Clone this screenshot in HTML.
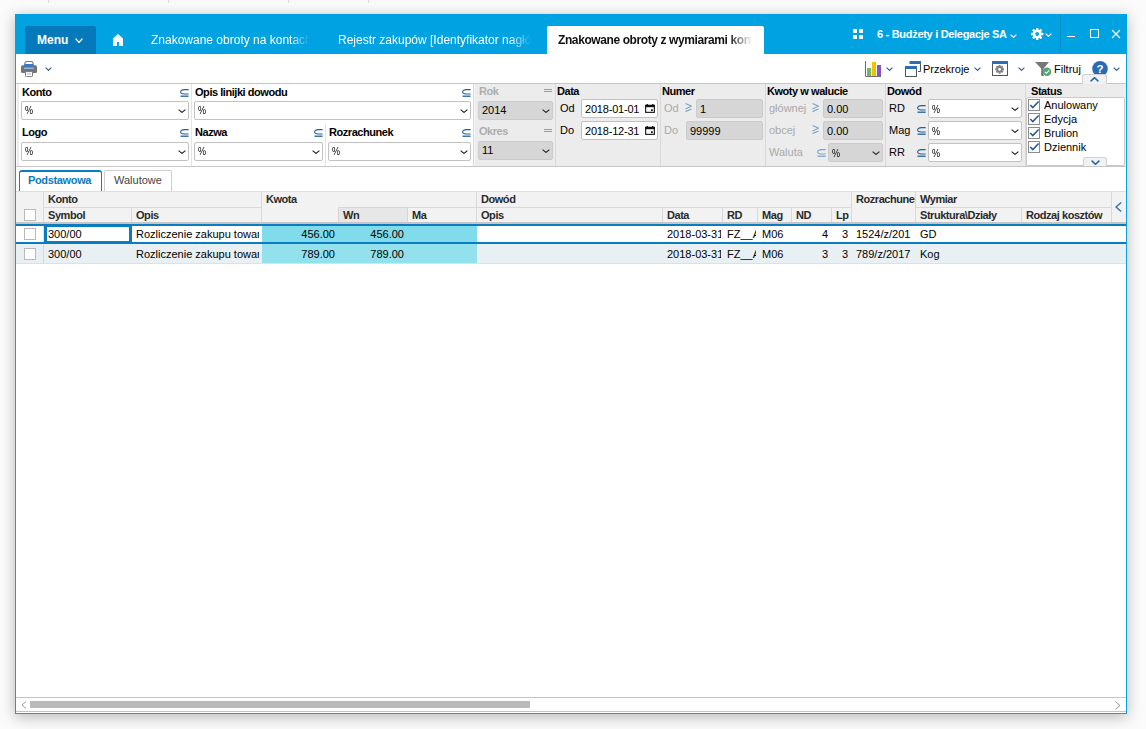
<!DOCTYPE html><html><head><meta charset="utf-8"><style>
*{margin:0;padding:0;box-sizing:border-box}
html,body{width:1146px;height:729px;overflow:hidden;background:#fbfbfb;font-family:"Liberation Sans",sans-serif;font-size:11px;color:#1c1c1c}
.a{position:absolute}
.t{white-space:nowrap;line-height:1}
.v{color:#000}
.lbl{font-weight:bold;letter-spacing:-0.45px;color:#000}
.glbl{font-weight:bold;letter-spacing:-0.45px;color:#adadad}
.g{color:#a9a9a9}
.cb{position:absolute;width:12px;height:12px;border:1px solid #b9b9b9;background:#fff}
.hd{position:absolute;font-weight:bold;letter-spacing:-0.45px;color:#2b2b2b;line-height:1;white-space:nowrap}
.cell{position:absolute;line-height:1;white-space:nowrap;color:#000;overflow:hidden}
</style></head><body>
<div class="a" style="left:48px;top:0px;width:1px;height:3px;background:#dadada"></div>
<div class="a" style="left:168px;top:0px;width:1px;height:3px;background:#dadada"></div>
<div class="a" style="left:288px;top:0px;width:1px;height:3px;background:#dadada"></div>
<div class="a" style="left:368px;top:0px;width:1px;height:3px;background:#dadada"></div>
<div class="a" style="left:15px;top:14px;width:1112px;height:700px;background:#fff;border:1px solid #0aa2e0;box-shadow:0 3px 14px rgba(0,0,0,.27)"></div>
<div class="a" style="left:15px;top:14px;width:1112px;height:40px;background:#00a2e2"></div>
<div class="a" style="left:25px;top:26px;width:71px;height:28px;background:#0679ba;border-radius:2px 2px 0 0"></div>
<div class="a t" style="left:37px;top:34px;font-size:12px;font-weight:bold;color:#fff">Menu</div>
<svg class="a" style="left:75px;top:38px" width="8" height="5" viewBox="0 0 8 5"><path d="M0.6 0.6 L4.0 4.4 L7.4 0.6" fill="none" stroke="#fff" stroke-width="1.4"/></svg>
<svg class="a" style="left:113px;top:34px" width="10" height="12" viewBox="0 0 10 12"><path d="M5 0 L10 4.6 V12 H6 V7.9 H4 V12 H0 V4.6 Z" fill="#fff"/></svg>
<div class="a" style="left:151px;top:34px;width:159px;height:15px;overflow:hidden;-webkit-mask-image:linear-gradient(90deg,#000 87%,transparent 100%)"><div class="t" style="font-size:12px;color:#fff">Znakowane obroty na kontach</div></div>
<div class="a" style="left:338px;top:34px;width:194px;height:15px;overflow:hidden;-webkit-mask-image:linear-gradient(90deg,#000 88%,transparent 100%)"><div class="t" style="font-size:12px;color:#fff">Rejestr zakupów [Identyfikator nagłówka]</div></div>
<div class="a" style="left:547px;top:26px;width:217px;height:28px;background:#fff;border-radius:2px 2px 0 0"></div>
<div class="a" style="left:558px;top:34px;width:194px;height:15px;overflow:hidden;-webkit-mask-image:linear-gradient(90deg,#000 88%,transparent 100%)"><div class="t" style="font-size:12px;color:#111;font-weight:bold;letter-spacing:-0.4px">Znakowane obroty z wymiarami kontach</div></div>
<div class="a" style="left:853px;top:29px;width:4px;height:4px;background:#fff"></div>
<div class="a" style="left:859px;top:29px;width:4px;height:4px;background:#fff"></div>
<div class="a" style="left:853px;top:35px;width:4px;height:4px;background:#fff"></div>
<div class="a" style="left:859px;top:35px;width:4px;height:4px;background:#fff"></div>
<div class="a t" style="left:877px;top:29px;font-size:11px;font-weight:bold;letter-spacing:-0.3px;color:#fff">6 - Budżety i Delegacje SA</div>
<svg class="a" style="left:1010px;top:34px" width="7" height="4" viewBox="0 0 7 4"><path d="M0.6 0.6 L3.5 3.4 L6.4 0.6" fill="none" stroke="#fff" stroke-width="1.1"/></svg>
<svg class="a" style="left:1030px;top:27px" width="14" height="14" viewBox="0 0 14 14"><g fill="#fff"><circle cx="7.2" cy="7" r="4.4"/><rect x="6" y="0.9" width="2.4" height="12.2" rx=".4" transform="rotate(0 7.2 7)"/><rect x="6" y="0.9" width="2.4" height="12.2" rx=".4" transform="rotate(45 7.2 7)"/><rect x="6" y="0.9" width="2.4" height="12.2" rx=".4" transform="rotate(90 7.2 7)"/><rect x="6" y="0.9" width="2.4" height="12.2" rx=".4" transform="rotate(135 7.2 7)"/></g><circle cx="7.2" cy="7" r="1.9" fill="#00a2e2"/></svg>
<svg class="a" style="left:1045px;top:33px" width="7" height="4" viewBox="0 0 7 4"><path d="M0.6 0.6 L3.5 3.4 L6.4 0.6" fill="none" stroke="#fff" stroke-width="1.1"/></svg>
<div class="a" style="left:1060px;top:14px;width:1px;height:40px;background:#0b8fc8"></div>
<div class="a" style="left:1067px;top:36px;width:8px;height:1px;background:#fff"></div>
<div class="a" style="left:1090px;top:29px;width:9px;height:9px;border:1px solid #fff"></div>
<svg class="a" style="left:1111px;top:29px" width="10" height="10" viewBox="0 0 10 10"><path d="M1 1 L9 9 M9 1 L1 9" stroke="#fff" stroke-width="1.1"/></svg>
<div class="a" style="left:16px;top:83px;width:1110px;height:1px;background:#c8c6c4"></div>
<svg class="a" style="left:21px;top:61px" width="16" height="16" viewBox="0 0 16 16"><path d="M3.8 3.5 V2.6 A2.2 2.2 0 0 1 6 0.5 H10 A2.2 2.2 0 0 1 12.2 2.6 V3.5" fill="none" stroke="#777" stroke-width="1.1"/><rect x="0" y="4.2" width="16" height="7.8" rx="1.6" fill="#747474"/><rect x="3" y="3" width="9.8" height="4.2" rx=".8" fill="#3f78c0"/><rect x="3" y="6.6" width="9.8" height="1.2" fill="#a8c4e4"/><rect x="4.5" y="10.6" width="7" height="5" rx=".8" fill="#fff" stroke="#777" stroke-width="1"/><rect x="6" y="12.3" width="4" height="1.2" fill="#a8c4e4"/></svg>
<svg class="a" style="left:45px;top:67px" width="7" height="4" viewBox="0 0 7 4"><path d="M0.6 0.6 L3.5 3.4 L6.4 0.6" fill="none" stroke="#2b5d92" stroke-width="1.1"/></svg>
<svg class="a" style="left:865px;top:61px" width="16" height="16" viewBox="0 0 16 16"><path d="M0.5 0 V15.5 H16" fill="none" stroke="#6e6e6e" stroke-width="1"/><rect x="2" y="7" width="4" height="8" fill="#6cba6c"/><rect x="7" y="1" width="4" height="14" fill="#f7bf00"/><rect x="12" y="4" width="4" height="11" fill="#8655c4"/></svg>
<svg class="a" style="left:886px;top:67px" width="7" height="4" viewBox="0 0 7 4"><path d="M0.6 0.6 L3.5 3.4 L6.4 0.6" fill="none" stroke="#2b5d92" stroke-width="1.1"/></svg>
<svg class="a" style="left:905px;top:61px" width="16" height="16" viewBox="0 0 16 16"><path d="M5 1.5 H15.5 V10.5 H13" fill="none" stroke="#555" stroke-width="1"/><rect x="4.5" y="0" width="11.5" height="3" fill="#2f6cb5"/><rect x="0.5" y="5.5" width="11" height="10" fill="#fff" stroke="#555" stroke-width="1"/><rect x="0" y="5" width="12" height="3" fill="#2f6cb5"/></svg>
<div class="a t" style="left:923px;top:64px;color:#000">Przekroje</div>
<svg class="a" style="left:974px;top:67px" width="7" height="4" viewBox="0 0 7 4"><path d="M0.6 0.6 L3.5 3.4 L6.4 0.6" fill="none" stroke="#2b5d92" stroke-width="1.1"/></svg>
<svg class="a" style="left:992px;top:61px" width="16" height="15" viewBox="0 0 16 15"><rect x="0.5" y="0.5" width="15" height="14" fill="#fff" stroke="#555" stroke-width="1"/><rect x="0" y="0" width="16" height="3" fill="#2f6cb5"/><g transform="translate(7.6 8.3)" fill="#808080"><circle r="3.2"/><rect x="-1" y="-4.4" width="2" height="8.8"/><rect x="-1" y="-4.4" width="2" height="8.8" transform="rotate(45)"/><rect x="-1" y="-4.4" width="2" height="8.8" transform="rotate(90)"/><rect x="-1" y="-4.4" width="2" height="8.8" transform="rotate(135)"/></g><circle cx="7.6" cy="8.3" r="1.4" fill="#fff"/></svg>
<svg class="a" style="left:1018px;top:67px" width="7" height="4" viewBox="0 0 7 4"><path d="M0.6 0.6 L3.5 3.4 L6.4 0.6" fill="none" stroke="#2b5d92" stroke-width="1.1"/></svg>
<svg class="a" style="left:1035px;top:62px" width="17" height="14" viewBox="0 0 17 14"><path d="M0 0 H14 L8.6 6.5 V14 H6.2 V6.5 Z" fill="#777"/><circle cx="12" cy="9.7" r="4.3" fill="#55a674"/><path d="M9.9 9.8 L11.5 11.3 L14.2 8.3" fill="none" stroke="#fff" stroke-width="1.1"/></svg>
<div class="a t" style="left:1054px;top:64px;color:#000">Filtruj</div>
<svg class="a" style="left:1092px;top:61px" width="16" height="16" viewBox="0 0 16 16"><circle cx="8" cy="7.8" r="7.8" fill="#2a6bb5"/><text x="8" y="12" text-anchor="middle" font-family="Liberation Sans" font-weight="bold" font-size="11.5" fill="#fff">?</text></svg>
<svg class="a" style="left:1113px;top:67px" width="7" height="4" viewBox="0 0 7 4"><path d="M0.6 0.6 L3.5 3.4 L6.4 0.6" fill="none" stroke="#2b5d92" stroke-width="1.1"/></svg>
<div class="a" style="left:1082px;top:74px;width:25px;height:10px;background:#f2f2f2;border:1px solid #d2d2d2;border-bottom:none;border-radius:3px 3px 0 0"></div>
<svg class="a" style="left:1090px;top:77px" width="9" height="5" viewBox="0 0 9 5"><path d="M0.6 4.4 L4.5 0.6 L8.4 4.4" fill="none" stroke="#2b6aa8" stroke-width="1.5"/></svg>
<div class="a" style="left:17px;top:84px;width:2px;height:82px;background:#ececec"></div>
<div class="a" style="left:474px;top:84px;width:652px;height:82px;background:#ececec"></div>
<div class="a" style="left:16px;top:166px;width:1110px;height:1px;background:#c8c6c4"></div>
<div class="a" style="left:191px;top:84px;width:1px;height:82px;background:#e3e3e3"></div>
<div class="a" style="left:325px;top:124px;width:1px;height:42px;background:#e3e3e3"></div>
<div class="a" style="left:473px;top:84px;width:1px;height:82px;background:#d8d8d8"></div>
<div class="a" style="left:474px;top:84px;width:1px;height:82px;background:#f6f6f6"></div>
<div class="a" style="left:555px;top:84px;width:1px;height:82px;background:#d9d9d9"></div>
<div class="a" style="left:660px;top:84px;width:1px;height:82px;background:#d9d9d9"></div>
<div class="a" style="left:765px;top:84px;width:1px;height:82px;background:#d9d9d9"></div>
<div class="a" style="left:885px;top:84px;width:1px;height:82px;background:#d9d9d9"></div>
<div class="a" style="left:1025px;top:84px;width:1px;height:82px;background:#d9d9d9"></div>
<div class="a t lbl" style="left:22px;top:87px;">Konto</div>
<svg class="a" style="left:462px;top:89px" width="9" height="8" viewBox="0 0 9 8"><path d="M8.6 0.6 H4.4 A3.8 2.2 0 0 0 4.4 5 H8.6" fill="none" stroke="#1f5e9c" stroke-width="1.05"/><path d="M0.5 7.2 H8.6" fill="none" stroke="#1f5e9c" stroke-width="1.3"/></svg>
<svg class="a" style="left:180px;top:89px" width="9" height="8" viewBox="0 0 9 8"><path d="M8.6 0.6 H4.4 A3.8 2.2 0 0 0 4.4 5 H8.6" fill="none" stroke="#1f5e9c" stroke-width="1.05"/><path d="M0.5 7.2 H8.6" fill="none" stroke="#1f5e9c" stroke-width="1.3"/></svg>
<div class="a" style="left:21px;top:101px;width:168px;height:19px;background:#fff;border:1px solid #c2c2c2;border-radius:2px"></div>
<div class="a t v" style="left:25px;top:105px;"><span style="display:inline-block;transform:scaleX(0.82);transform-origin:0 0;color:#000">%</span></div>
<svg class="a" style="left:178px;top:109px" width="8" height="4" viewBox="0 0 8 4"><path d="M0.6 0.6 L4.0 3.4 L7.4 0.6" fill="none" stroke="#222" stroke-width="1.1"/></svg>
<div class="a t lbl" style="left:22px;top:127px;">Logo</div>
<svg class="a" style="left:180px;top:129px" width="9" height="8" viewBox="0 0 9 8"><path d="M8.6 0.6 H4.4 A3.8 2.2 0 0 0 4.4 5 H8.6" fill="none" stroke="#1f5e9c" stroke-width="1.05"/><path d="M0.5 7.2 H8.6" fill="none" stroke="#1f5e9c" stroke-width="1.3"/></svg>
<div class="a" style="left:21px;top:142px;width:168px;height:19px;background:#fff;border:1px solid #c2c2c2;border-radius:2px"></div>
<div class="a t v" style="left:25px;top:146px;"><span style="display:inline-block;transform:scaleX(0.82);transform-origin:0 0;color:#000">%</span></div>
<svg class="a" style="left:178px;top:150px" width="8" height="4" viewBox="0 0 8 4"><path d="M0.6 0.6 L4.0 3.4 L7.4 0.6" fill="none" stroke="#222" stroke-width="1.1"/></svg>
<div class="a t lbl" style="left:195px;top:87px;">Opis linijki dowodu</div>
<div class="a" style="left:194px;top:101px;width:277px;height:19px;background:#fff;border:1px solid #c2c2c2;border-radius:2px"></div>
<div class="a t v" style="left:198px;top:105px;"><span style="display:inline-block;transform:scaleX(0.82);transform-origin:0 0;color:#000">%</span></div>
<svg class="a" style="left:460px;top:109px" width="8" height="4" viewBox="0 0 8 4"><path d="M0.6 0.6 L4.0 3.4 L7.4 0.6" fill="none" stroke="#222" stroke-width="1.1"/></svg>
<div class="a t lbl" style="left:195px;top:127px;">Nazwa</div>
<svg class="a" style="left:314px;top:129px" width="9" height="8" viewBox="0 0 9 8"><path d="M8.6 0.6 H4.4 A3.8 2.2 0 0 0 4.4 5 H8.6" fill="none" stroke="#1f5e9c" stroke-width="1.05"/><path d="M0.5 7.2 H8.6" fill="none" stroke="#1f5e9c" stroke-width="1.3"/></svg>
<div class="a" style="left:194px;top:142px;width:129px;height:19px;background:#fff;border:1px solid #c2c2c2;border-radius:2px"></div>
<div class="a t v" style="left:198px;top:146px;"><span style="display:inline-block;transform:scaleX(0.82);transform-origin:0 0;color:#000">%</span></div>
<svg class="a" style="left:312px;top:150px" width="8" height="4" viewBox="0 0 8 4"><path d="M0.6 0.6 L4.0 3.4 L7.4 0.6" fill="none" stroke="#222" stroke-width="1.1"/></svg>
<div class="a t lbl" style="left:329px;top:127px;">Rozrachunek</div>
<svg class="a" style="left:462px;top:129px" width="9" height="8" viewBox="0 0 9 8"><path d="M8.6 0.6 H4.4 A3.8 2.2 0 0 0 4.4 5 H8.6" fill="none" stroke="#1f5e9c" stroke-width="1.05"/><path d="M0.5 7.2 H8.6" fill="none" stroke="#1f5e9c" stroke-width="1.3"/></svg>
<div class="a" style="left:328px;top:142px;width:143px;height:19px;background:#fff;border:1px solid #c2c2c2;border-radius:2px"></div>
<div class="a t v" style="left:332px;top:146px;"><span style="display:inline-block;transform:scaleX(0.82);transform-origin:0 0;color:#000">%</span></div>
<svg class="a" style="left:460px;top:150px" width="8" height="4" viewBox="0 0 8 4"><path d="M0.6 0.6 L4.0 3.4 L7.4 0.6" fill="none" stroke="#222" stroke-width="1.1"/></svg>
<div class="a t glbl" style="left:479px;top:86px;">Rok</div>
<div class="a" style="left:544px;top:89px;width:8px;height:1px;background:#7ba3c9"></div>
<div class="a" style="left:544px;top:91px;width:8px;height:1px;background:#7ba3c9"></div>
<div class="a" style="left:478px;top:101px;width:75px;height:19px;background:#d6d6d6;border:1px solid #cbcbcb;border-radius:2px"></div>
<div class="a t v" style="left:482px;top:105px;">2014</div>
<svg class="a" style="left:542px;top:109px" width="8" height="4" viewBox="0 0 8 4"><path d="M0.6 0.6 L4.0 3.4 L7.4 0.6" fill="none" stroke="#222" stroke-width="1.1"/></svg>
<div class="a t glbl" style="left:479px;top:126px;">Okres</div>
<div class="a" style="left:544px;top:129px;width:8px;height:1px;background:#7ba3c9"></div>
<div class="a" style="left:544px;top:131px;width:8px;height:1px;background:#7ba3c9"></div>
<div class="a" style="left:478px;top:141px;width:75px;height:19px;background:#d6d6d6;border:1px solid #cbcbcb;border-radius:2px"></div>
<div class="a t v" style="left:482px;top:145px;">11</div>
<svg class="a" style="left:542px;top:149px" width="8" height="4" viewBox="0 0 8 4"><path d="M0.6 0.6 L4.0 3.4 L7.4 0.6" fill="none" stroke="#222" stroke-width="1.1"/></svg>
<div class="a t lbl" style="left:557px;top:86px;">Data</div>
<div class="a t" style="left:560px;top:103px;color:#000">Od</div>
<div class="a t" style="left:560px;top:125px;color:#000">Do</div>
<div class="a" style="left:581px;top:99px;width:77px;height:19px;background:#fff;border:1px solid #c2c2c2;border-radius:2px"></div>
<div class="a t v" style="left:585px;top:104px;"><span style="letter-spacing:-0.2px">2018-01-01</span></div>
<svg class="a" style="left:645px;top:104px" width="10" height="9" viewBox="0 0 10 9"><rect x="1.6" y="0" width="1.3" height="1.6" fill="#111"/><rect x="7.1" y="0" width="1.3" height="1.6" fill="#111"/><rect x="0.65" y="1.3" width="8.7" height="7.05" fill="none" stroke="#111" stroke-width="1.1"/><rect x="0.2" y="1" width="9.6" height="2.2" fill="#111"/><rect x="6" y="5.3" width="1.8" height="1.7" fill="#111"/></svg>
<div class="a" style="left:581px;top:121px;width:77px;height:19px;background:#fff;border:1px solid #c2c2c2;border-radius:2px"></div>
<div class="a t v" style="left:585px;top:126px;"><span style="letter-spacing:-0.2px">2018-12-31</span></div>
<svg class="a" style="left:645px;top:126px" width="10" height="9" viewBox="0 0 10 9"><rect x="1.6" y="0" width="1.3" height="1.6" fill="#111"/><rect x="7.1" y="0" width="1.3" height="1.6" fill="#111"/><rect x="0.65" y="1.3" width="8.7" height="7.05" fill="none" stroke="#111" stroke-width="1.1"/><rect x="0.2" y="1" width="9.6" height="2.2" fill="#111"/><rect x="6" y="5.3" width="1.8" height="1.7" fill="#111"/></svg>
<div class="a t lbl" style="left:662px;top:86px;">Numer</div>
<div class="a t g" style="left:664px;top:103px;">Od</div>
<svg class="a" style="left:685px;top:103px" width="7" height="9" viewBox="0 0 7 9"><path d="M0.5 0.5 L6.5 3.2 L0.5 5.9 M0.5 8.6 L6.5 5.9" fill="none" stroke="#7ba3c9" stroke-width="1.1"/></svg>
<div class="a" style="left:696px;top:99px;width:67px;height:19px;background:#d6d6d6;border:1px solid #cbcbcb;border-radius:2px"></div>
<div class="a t v" style="left:700px;top:104px;">1</div>
<div class="a t g" style="left:664px;top:125px;">Do</div>
<div class="a" style="left:686px;top:121px;width:77px;height:19px;background:#d6d6d6;border:1px solid #cbcbcb;border-radius:2px"></div>
<div class="a t v" style="left:690px;top:126px;">99999</div>
<div class="a t lbl" style="left:767px;top:86px;">Kwoty w walucie</div>
<div class="a t g" style="left:769px;top:103px;">głównej</div>
<svg class="a" style="left:812px;top:103px" width="7" height="9" viewBox="0 0 7 9"><path d="M0.5 0.5 L6.5 3.2 L0.5 5.9 M0.5 8.6 L6.5 5.9" fill="none" stroke="#7ba3c9" stroke-width="1.1"/></svg>
<div class="a" style="left:823px;top:99px;width:60px;height:19px;background:#d6d6d6;border:1px solid #cbcbcb;border-radius:2px"></div>
<div class="a t v" style="left:827px;top:104px;">0.00</div>
<div class="a t g" style="left:769px;top:125px;">obcej</div>
<svg class="a" style="left:812px;top:125px" width="7" height="9" viewBox="0 0 7 9"><path d="M0.5 0.5 L6.5 3.2 L0.5 5.9 M0.5 8.6 L6.5 5.9" fill="none" stroke="#7ba3c9" stroke-width="1.1"/></svg>
<div class="a" style="left:823px;top:121px;width:60px;height:19px;background:#d6d6d6;border:1px solid #cbcbcb;border-radius:2px"></div>
<div class="a t v" style="left:827px;top:126px;">0.00</div>
<div class="a t g" style="left:769px;top:147px;">Waluta</div>
<svg class="a" style="left:817px;top:149px" width="9" height="8" viewBox="0 0 9 8"><path d="M8.6 0.6 H4.4 A3.8 2.2 0 0 0 4.4 5 H8.6" fill="none" stroke="#7ba3c9" stroke-width="1.05"/><path d="M0.5 7.2 H8.6" fill="none" stroke="#7ba3c9" stroke-width="1.3"/></svg>
<div class="a" style="left:828px;top:143px;width:55px;height:19px;background:#d6d6d6;border:1px solid #cbcbcb;border-radius:2px"></div>
<div class="a t v" style="left:832px;top:148px;"><span style="display:inline-block;transform:scaleX(0.82);transform-origin:0 0;color:#000">%</span></div>
<svg class="a" style="left:872px;top:151px" width="8" height="4" viewBox="0 0 8 4"><path d="M0.6 0.6 L4.0 3.4 L7.4 0.6" fill="none" stroke="#222" stroke-width="1.1"/></svg>
<div class="a t lbl" style="left:887px;top:86px;">Dowód</div>
<div class="a t" style="left:889px;top:103px;color:#000">RD</div>
<svg class="a" style="left:917px;top:105px" width="9" height="8" viewBox="0 0 9 8"><path d="M8.6 0.6 H4.4 A3.8 2.2 0 0 0 4.4 5 H8.6" fill="none" stroke="#1f5e9c" stroke-width="1.05"/><path d="M0.5 7.2 H8.6" fill="none" stroke="#1f5e9c" stroke-width="1.3"/></svg>
<div class="a" style="left:928px;top:99px;width:94px;height:19px;background:#fff;border:1px solid #c2c2c2;border-radius:2px"></div>
<div class="a t v" style="left:932px;top:104px;"><span style="display:inline-block;transform:scaleX(0.82);transform-origin:0 0;color:#000">%</span></div>
<svg class="a" style="left:1011px;top:107px" width="8" height="4" viewBox="0 0 8 4"><path d="M0.6 0.6 L4.0 3.4 L7.4 0.6" fill="none" stroke="#222" stroke-width="1.1"/></svg>
<div class="a t" style="left:889px;top:125px;color:#000">Mag</div>
<svg class="a" style="left:917px;top:127px" width="9" height="8" viewBox="0 0 9 8"><path d="M8.6 0.6 H4.4 A3.8 2.2 0 0 0 4.4 5 H8.6" fill="none" stroke="#1f5e9c" stroke-width="1.05"/><path d="M0.5 7.2 H8.6" fill="none" stroke="#1f5e9c" stroke-width="1.3"/></svg>
<div class="a" style="left:928px;top:121px;width:94px;height:19px;background:#fff;border:1px solid #c2c2c2;border-radius:2px"></div>
<div class="a t v" style="left:932px;top:126px;"><span style="display:inline-block;transform:scaleX(0.82);transform-origin:0 0;color:#000">%</span></div>
<svg class="a" style="left:1011px;top:129px" width="8" height="4" viewBox="0 0 8 4"><path d="M0.6 0.6 L4.0 3.4 L7.4 0.6" fill="none" stroke="#222" stroke-width="1.1"/></svg>
<div class="a t" style="left:889px;top:147px;color:#000">RR</div>
<svg class="a" style="left:917px;top:149px" width="9" height="8" viewBox="0 0 9 8"><path d="M8.6 0.6 H4.4 A3.8 2.2 0 0 0 4.4 5 H8.6" fill="none" stroke="#1f5e9c" stroke-width="1.05"/><path d="M0.5 7.2 H8.6" fill="none" stroke="#1f5e9c" stroke-width="1.3"/></svg>
<div class="a" style="left:928px;top:143px;width:94px;height:19px;background:#fff;border:1px solid #c2c2c2;border-radius:2px"></div>
<div class="a t v" style="left:932px;top:148px;"><span style="display:inline-block;transform:scaleX(0.82);transform-origin:0 0;color:#000">%</span></div>
<svg class="a" style="left:1011px;top:151px" width="8" height="4" viewBox="0 0 8 4"><path d="M0.6 0.6 L4.0 3.4 L7.4 0.6" fill="none" stroke="#222" stroke-width="1.1"/></svg>
<div class="a t lbl" style="left:1031px;top:86px;">Status</div>
<div class="a" style="left:1026px;top:97px;width:99px;height:69px;background:#fff;border:1px solid #c9c9c9;border-radius:2px"></div>
<div class="a" style="left:1028px;top:99px;width:12px;height:12px;background:#fff;border:1px solid #8c8c8c"></div>
<svg class="a" style="left:1028px;top:99px" width="12" height="12" viewBox="0 0 12 12"><path d="M2.3 6 L4.8 8.6 L10.6 2.4" fill="none" stroke="#1f5a9a" stroke-width="1.5"/></svg>
<div class="a t" style="left:1044px;top:100px;color:#000">Anulowany</div>
<div class="a" style="left:1028px;top:113px;width:12px;height:12px;background:#fff;border:1px solid #8c8c8c"></div>
<svg class="a" style="left:1028px;top:113px" width="12" height="12" viewBox="0 0 12 12"><path d="M2.3 6 L4.8 8.6 L10.6 2.4" fill="none" stroke="#1f5a9a" stroke-width="1.5"/></svg>
<div class="a t" style="left:1044px;top:114px;color:#000">Edycja</div>
<div class="a" style="left:1028px;top:127px;width:12px;height:12px;background:#fff;border:1px solid #8c8c8c"></div>
<svg class="a" style="left:1028px;top:127px" width="12" height="12" viewBox="0 0 12 12"><path d="M2.3 6 L4.8 8.6 L10.6 2.4" fill="none" stroke="#1f5a9a" stroke-width="1.5"/></svg>
<div class="a t" style="left:1044px;top:128px;color:#000">Brulion</div>
<div class="a" style="left:1028px;top:141px;width:12px;height:12px;background:#fff;border:1px solid #8c8c8c"></div>
<svg class="a" style="left:1028px;top:141px" width="12" height="12" viewBox="0 0 12 12"><path d="M2.3 6 L4.8 8.6 L10.6 2.4" fill="none" stroke="#1f5a9a" stroke-width="1.5"/></svg>
<div class="a t" style="left:1044px;top:142px;color:#000">Dziennik</div>
<div class="a" style="left:1083px;top:157px;width:24px;height:9px;background:#f2f2f2;border:1px solid #d2d2d2;border-bottom:none;border-radius:3px 3px 0 0"></div>
<svg class="a" style="left:1091px;top:160px" width="9" height="5" viewBox="0 0 9 5"><path d="M0.6 0.6 L4.5 4.4 L8.4 0.6" fill="none" stroke="#2b6aa8" stroke-width="1.5"/></svg>
<div class="a" style="left:19px;top:170px;width:83px;height:23px;background:#fff;border:1px solid #0a7cc0;border-top-width:2px;border-bottom:none;border-radius:3px 3px 0 0"></div>
<div class="a t" style="left:28px;top:175px;font-weight:bold;letter-spacing:-0.35px;color:#0a7cc0">Podstawowa</div>
<div class="a" style="left:104px;top:170px;width:68px;height:23px;background:#fff;border:1px solid #cfcfcf;border-bottom:none;border-radius:2px 2px 0 0"></div>
<div class="a t" style="left:114px;top:175px;color:#444">Walutowe</div>
<div class="a" style="left:16px;top:191px;width:1110px;height:1px;background:#dedede"></div>
<div class="a" style="left:16px;top:192px;width:1110px;height:30px;background:#f2f2f2"></div>
<div class="a" style="left:16px;top:222px;width:1110px;height:2px;background:#c9c5c2"></div>
<div class="a" style="left:43px;top:192px;width:1px;height:30px;background:#d9d9d9"></div>
<div class="a" style="left:261px;top:192px;width:1px;height:30px;background:#d9d9d9"></div>
<div class="a" style="left:476px;top:192px;width:1px;height:30px;background:#d9d9d9"></div>
<div class="a" style="left:851px;top:192px;width:1px;height:30px;background:#d9d9d9"></div>
<div class="a" style="left:915px;top:192px;width:1px;height:30px;background:#d9d9d9"></div>
<div class="a" style="left:1111px;top:192px;width:1px;height:30px;background:#d9d9d9"></div>
<div class="a" style="left:131px;top:208px;width:1px;height:14px;background:#d9d9d9"></div>
<div class="a" style="left:662px;top:208px;width:1px;height:14px;background:#d9d9d9"></div>
<div class="a" style="left:722px;top:208px;width:1px;height:14px;background:#d9d9d9"></div>
<div class="a" style="left:757px;top:208px;width:1px;height:14px;background:#d9d9d9"></div>
<div class="a" style="left:791px;top:208px;width:1px;height:14px;background:#d9d9d9"></div>
<div class="a" style="left:831px;top:208px;width:1px;height:14px;background:#d9d9d9"></div>
<div class="a" style="left:1021px;top:208px;width:1px;height:14px;background:#d9d9d9"></div>
<div class="a" style="left:44px;top:207px;width:217px;height:1px;background:#d9d9d9"></div>
<div class="a" style="left:476px;top:207px;width:375px;height:1px;background:#d9d9d9"></div>
<div class="a" style="left:915px;top:207px;width:196px;height:1px;background:#d9d9d9"></div>
<div class="a" style="left:338px;top:207px;width:70px;height:15px;background:#e7e7e7;border:1px solid #d6d6d6;border-bottom:none"></div>
<div class="a" style="left:407px;top:207px;width:69px;height:1px;background:#d9d9d9"></div>
<div class="hd" style="left:48px;top:194px">Konto</div>
<div class="hd" style="left:266px;top:194px">Kwota</div>
<div class="hd" style="left:481px;top:194px">Dowód</div>
<div class="hd" style="left:856px;top:194px;width:59px;overflow:hidden">Rozrachunek</div>
<div class="hd" style="left:920px;top:194px">Wymiar</div>
<div class="hd" style="left:48px;top:210px">Symbol</div>
<div class="hd" style="left:136px;top:210px">Opis</div>
<div class="hd" style="left:343px;top:210px">Wn</div>
<div class="hd" style="left:412px;top:210px">Ma</div>
<div class="hd" style="left:481px;top:210px">Opis</div>
<div class="hd" style="left:667px;top:210px">Data</div>
<div class="hd" style="left:727px;top:210px">RD</div>
<div class="hd" style="left:762px;top:210px">Mag</div>
<div class="hd" style="left:796px;top:210px">ND</div>
<div class="hd" style="left:836px;top:210px">Lp</div>
<div class="hd" style="left:920px;top:210px">Struktura\Działy</div>
<div class="hd" style="left:1026px;top:210px">Rodzaj kosztów</div>
<div class="cb" style="left:24px;top:209px"></div>
<svg class="a" style="left:1115px;top:202px" width="7" height="10" viewBox="0 0 7 10"><path d="M6.2 0.6 L1 5 L6.2 9.4" fill="none" stroke="#2b6cb0" stroke-width="1.3"/></svg>
<div class="a" style="left:16px;top:224px;width:1110px;height:2px;background:#0a7cc0"></div>
<div class="a" style="left:16px;top:226px;width:1110px;height:16px;background:#fff"></div>
<div class="a" style="left:16px;top:242px;width:1110px;height:2px;background:#0a7cc0"></div>
<div class="a" style="left:16px;top:244px;width:1110px;height:19px;background:#e9f0f4"></div>
<div class="a" style="left:16px;top:263px;width:1110px;height:1px;background:#dae2e8"></div>
<div class="a" style="left:43px;top:226px;width:1px;height:16px;background:#e2e2e2"></div>
<div class="a" style="left:43px;top:244px;width:1px;height:19px;background:#c9dcea"></div>
<div class="a" style="left:262px;top:226px;width:215px;height:16px;background:#80dcea"></div>
<div class="a" style="left:262px;top:244px;width:215px;height:19px;background:#93e1ed"></div>
<div class="a" style="left:44px;top:224px;width:88px;height:20px;border:3px solid #0a7cc0;background:#fff"></div>
<div class="cb" style="left:24px;top:228px"></div>
<div class="cb" style="left:24px;top:248px"></div>
<div class="cell" style="left:48px;top:229px;width:80px;text-align:left">300/00</div>
<div class="cell" style="left:136px;top:229px;width:123px;text-align:left">Rozliczenie zakupu towarów</div>
<div class="cell" style="left:262px;top:229px;width:73px;text-align:right">456.00</div>
<div class="cell" style="left:338px;top:229px;width:66px;text-align:right">456.00</div>
<div class="cell" style="left:667px;top:229px;width:54px;text-align:left">2018-03-31</div>
<div class="cell" style="left:727px;top:229px;width:29px;text-align:left">FZ__A</div>
<div class="cell" style="left:762px;top:229px;width:28px;text-align:left">M06</div>
<div class="cell" style="left:792px;top:229px;width:36px;text-align:right">4</div>
<div class="cell" style="left:832px;top:229px;width:16px;text-align:right">3</div>
<div class="cell" style="left:856px;top:229px;width:58px;text-align:left">1524/z/201</div>
<div class="cell" style="left:920px;top:229px;width:100px;text-align:left">GD</div>
<div class="cell" style="left:48px;top:249px;width:80px;text-align:left">300/00</div>
<div class="cell" style="left:136px;top:249px;width:123px;text-align:left">Rozliczenie zakupu towarów</div>
<div class="cell" style="left:262px;top:249px;width:73px;text-align:right">789.00</div>
<div class="cell" style="left:338px;top:249px;width:66px;text-align:right">789.00</div>
<div class="cell" style="left:667px;top:249px;width:54px;text-align:left">2018-03-31</div>
<div class="cell" style="left:727px;top:249px;width:29px;text-align:left">FZ__A</div>
<div class="cell" style="left:762px;top:249px;width:28px;text-align:left">M06</div>
<div class="cell" style="left:792px;top:249px;width:36px;text-align:right">3</div>
<div class="cell" style="left:832px;top:249px;width:16px;text-align:right">3</div>
<div class="cell" style="left:856px;top:249px;width:58px;text-align:left">789/z/2017</div>
<div class="cell" style="left:920px;top:249px;width:100px;text-align:left">Kog</div>
<div class="a" style="left:16px;top:697px;width:1110px;height:1px;background:#c4c4c4"></div>
<svg class="a" style="left:21px;top:701px" width="6" height="8" viewBox="0 0 6 8"><path d="M5 0.5 L1 4 L5 7.5" fill="none" stroke="#9a9a9a" stroke-width="1"/></svg>
<div class="a" style="left:30px;top:701px;width:500px;height:7px;background:#b9b9b9"></div>
<svg class="a" style="left:1115px;top:701px" width="6" height="9" viewBox="0 0 6 9"><path d="M0.5 0.5 L5 4.5 L0.5 8.5" fill="none" stroke="#9a9a9a" stroke-width="1"/></svg>
<div class="a" style="left:16px;top:711px;width:1110px;height:1px;background:#c4c4c4"></div>
</body></html>
